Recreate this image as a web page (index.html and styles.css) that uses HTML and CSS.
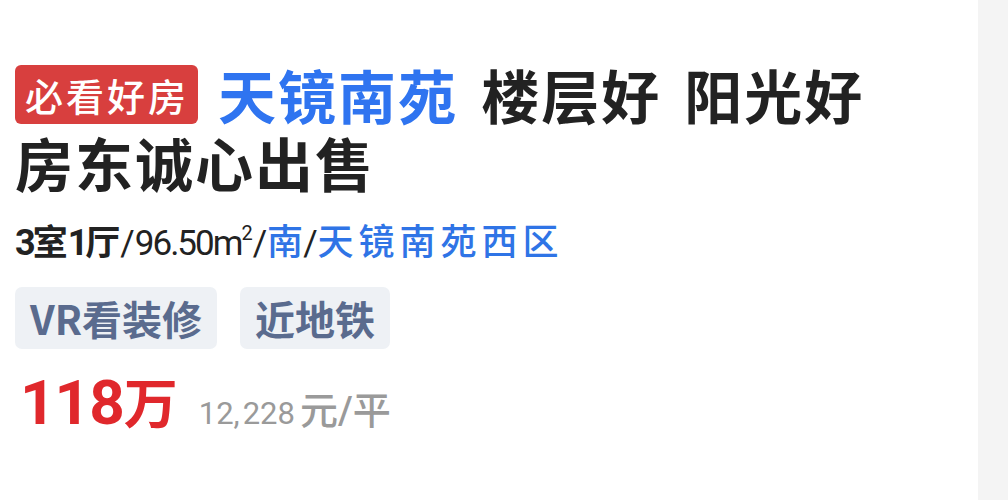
FILE: index.html
```html
<!DOCTYPE html>
<html lang="zh-CN">
<head>
<meta charset="utf-8">
<link rel="stylesheet" href="styles.css">
</head>
<body>
<div class="page">
  <main class="card">
    <h1 class="title"><span class="badge">必看好房</span><span class="estate">天镜南苑</span> 楼层好 阳光好<br>房东诚心出售</h1>
    <p class="info"><span class="rooms"><span class="d">3</span>室<span class="d">1</span>厅</span><span class="sep">/</span><span class="num">96.50m<sup>2</sup></span><span class="sep">/</span><span class="blue">南</span><span class="sep">/</span><span class="blue wide">天镜南苑西区</span></p>
    <div class="tags">
      <span class="tag">VR看装修</span>
      <span class="tag">近地铁</span>
    </div>
    <div class="price">
      <span class="total"><span class="digits">118</span>万</span>
      <span class="unit"><span class="unit-num">12<span class="comma">,</span>228</span>元<span class="slash">/</span>平</span>
    </div>
  </main>
  <aside class="side"></aside>
</div>
</body>
</html>
```

FILE: styles.css
```css
* { box-sizing: border-box; }
html, body { margin: 0; padding: 0; }
body {
  background: #ffffff;
  font-family: "Noto Sans CJK SC", "Noto Sans", sans-serif;
  color: #222222;
}
.page {
  display: flex;
  width: 1008px;
  height: 500px;
  overflow: hidden;
}
.card {
  flex: 1;
  padding: 60px 0 0 15px;
}
.side {
  width: 30px;
  background: #f4f4f4;
}
.title {
  margin: 0;
  font-size: 58px;
  line-height: 68px;
  font-weight: 700;
  color: #222222;
  letter-spacing: 2px;
  word-spacing: 8px;
}
.badge {
  display: inline-block;
  vertical-align: top;
  margin-top: 5px;
  height: 59px;
  line-height: 59px;
  padding: 0 9px 0 10px;
  background: #d83f3e;
  color: #ffffff;
  font-size: 38px;
  font-weight: 500;
  border-radius: 6px;
  margin-right: 20px;
  letter-spacing: 3px;
  word-spacing: 0;
}
.estate { color: #2f74f0; }
.info {
  margin: 19px 0 0 0;
  font-size: 35px;
  line-height: 48px;
  color: #222222;
}
.rooms { font-weight: 700; }
.d {
  font-family: "Roboto", sans-serif;
  font-size: 36px;
  font-weight: 700;
  letter-spacing: -3px;
}
.num {
  font-family: "Roboto", sans-serif;
  font-size: 35px;
  letter-spacing: -2px;
}
.num sup { font-size: 20px; vertical-align: 15px; line-height: 0; letter-spacing: 0; }
.sep { font-family: "Roboto", sans-serif; font-size: 35px; }
.blue { color: #2f74e6; font-weight: 500; font-size: 36px; }
.wide { letter-spacing: 5px; }
.tags {
  display: flex;
  gap: 23px;
  margin: 19px 0 0 0;
}
.tag {
  display: inline-block;
  height: 62px;
  line-height: 62px;
  padding: 0 15px;
  background: #eef1f5;
  color: #5a6b8e;
  font-size: 40px;
  font-weight: 700;
  border-radius: 7px;
}
.price {
  display: flex;
  align-items: baseline;
  margin: 17px 0 0 5px;
}
.total {
  color: #e0282c;
  font-size: 54px;
  font-weight: 700;
  line-height: 70px;
}
.digits {
  font-family: "Roboto", sans-serif;
  font-size: 62px;
  letter-spacing: -1px;
}
.unit {
  margin-left: 21px;
  color: #9a9a9a;
  font-size: 38px;
  font-weight: 500;
}
.unit-num {
  font-family: "Roboto", sans-serif;
  font-size: 31px;
  font-weight: 400;
  letter-spacing: 0;
  margin-right: 5px;
}
.comma { margin-right: 3px; }
.slash {
  font-family: "Roboto", sans-serif;
}
```
